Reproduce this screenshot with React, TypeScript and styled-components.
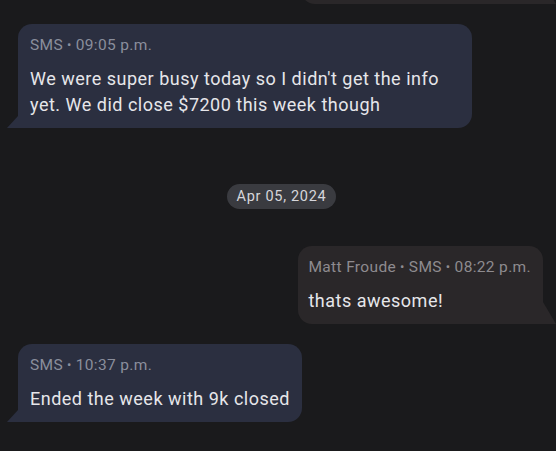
import React from "react";
import styled, { createGlobalStyle, css } from "styled-components";

const Global = createGlobalStyle`
  html, body { margin: 0; padding: 0; background: #1a1a1c; }
  body { font-family: Roboto, "Noto Sans", sans-serif; -webkit-font-smoothing: antialiased; }
  #root { width: 556px; height: 451px; overflow: hidden; }
`;

const Thread = styled.div`
  display: flex;
  flex-direction: column;
  width: 556px;
  height: 451px;
  overflow: hidden;
  background: #1a1a1c;
`;

const Row = styled.div<{ $out?: boolean; $gap: number }>`
  display: flex;
  justify-content: ${(p) => (p.$out ? "flex-end" : "flex-start")};
  padding: 0 ${(p) => (p.$out ? "13px" : "0")} 0 ${(p) => (p.$out ? "0" : "18px")};
  margin-top: ${(p) => p.$gap}px;
`;

const Bubble = styled.div<{ $out?: boolean }>`
  position: relative;
  box-sizing: border-box;
  max-width: 454px;
  padding: 10px 12px 10px 12px;
  border-radius: 14px;
  background: ${(p) => (p.$out ? "#2a2729" : "#2b2f40")};
  ${(p) =>
    p.$out
      ? css`
          border-bottom-right-radius: 0;
          padding-left: 10px;
          padding-right: 12px;
          &::after {
            content: "";
            position: absolute;
            right: -13px;
            bottom: 0;
            width: 13px;
            height: 22px;
            background: #2a2729;
            clip-path: polygon(0 0, 100% 100%, 0 100%);
          }
        `
      : css`
          border-bottom-left-radius: 0;
          &::after {
            content: "";
            position: absolute;
            left: -11px;
            bottom: 0;
            width: 11px;
            height: 12px;
            background: #2b2f40;
            clip-path: polygon(100% 0, 100% 100%, 0 100%);
          }
        `}
`;

const TopStub = styled(Bubble)`
  margin-top: -60px;
  height: 64px;
  width: 242px;
`;

const Meta = styled.div<{ $out?: boolean }>`
  font-size: 15.5px;
  line-height: 22px;
  letter-spacing: 0.35px;
  color: ${(p) => (p.$out ? "#8e8b8f" : "#8a8e9c")};
  white-space: nowrap;
`;

const Dot = styled.span`
  font-size: 13px;
  margin: 0 4px;
  position: relative;
  top: -1px;
`;

const Body = styled.div`
  margin-top: 9px;
  font-size: 18px;
  line-height: 26px;
  letter-spacing: 0.5px;
  color: #e6e6ea;
`;

const DateRow = styled.div`
  display: flex;
  justify-content: center;
  padding-left: 7px;
  margin-top: 56px;
`;

const DatePill = styled.div`
  height: 25px;
  line-height: 25px;
  padding: 0 10px;
  border-radius: 13px;
  background: #3a3b40;
  color: #d6d6db;
  font-size: 14.5px;
  font-weight: 400;
  letter-spacing: 0.7px;
`;

type Msg = { out?: boolean; meta: string[]; text: string; gap: number };

const Message: React.FC<Msg> = ({ out, meta, text, gap }) => (
  <Row $out={out} $gap={gap}>
    <Bubble $out={out}>
      <Meta $out={out}>
        {meta.map((m, i) => (
          <React.Fragment key={i}>
            {i > 0 && <Dot>•</Dot>}
            {m}
          </React.Fragment>
        ))}
      </Meta>
      <Body>{text}</Body>
    </Bubble>
  </Row>
);

export default function App() {
  return (
    <>
      <Global />
      <Thread>
        <Row $out $gap={0}>
          <TopStub $out />
        </Row>
        <Message
          gap={20}
          meta={["SMS", "09:05 p.m."]}
          text="We were super busy today so I didn't get the info yet. We did close $7200 this week though"
        />
        <DateRow>
          <DatePill>Apr 05, 2024</DatePill>
        </DateRow>
        <Message
          out
          gap={37}
          meta={["Matt Froude", "SMS", "08:22 p.m."]}
          text="thats awesome!"
        />
        <Message gap={20} meta={["SMS", "10:37 p.m."]} text="Ended the week with 9k closed" />
      </Thread>
    </>
  );
}
